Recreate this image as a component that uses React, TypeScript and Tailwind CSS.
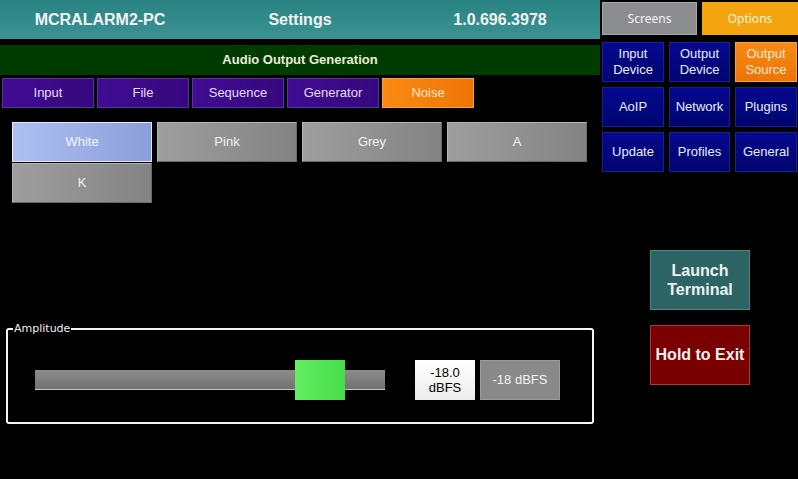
import React from 'react';

const tabs = ['Input', 'File', 'Sequence', 'Generator', 'Noise'];
const noiseTypes = ['White', 'Pink', 'Grey', 'A', 'K'];
const navItems = [
    ['Input', 'Device'],
    ['Output', 'Device'],
    ['Output', 'Source'],
    ['AoIP'],
    ['Network'],
    ['Plugins'],
    ['Update'],
    ['Profiles'],
    ['General'],
];

const App = () => {
    return (
        <div className="flex w-[798px] h-[479px] bg-black text-white overflow-hidden font-['Liberation_Sans',Arial,sans-serif]">
            {/* left panel */}
            <div className="flex flex-col w-[600px] shrink-0">
                <div className="flex items-center h-[39px] bg-gradient-to-b from-[#2a8383] to-[#3a9292] text-[16px] font-bold text-[#f2f2f2]">
                    <div className="w-[200px] text-center">MCRALARM2-PC</div>
                    <div className="w-[200px] text-center">Settings</div>
                    <div className="w-[200px] text-center">1.0.696.3978</div>
                </div>
                <div className="flex items-center justify-center h-[30px] mt-[6px] bg-[#003c00] text-[13px] font-bold text-[#ecebd8]">
                    Audio Output Generation
                </div>
                <div className="flex gap-[3px] px-[2px] mt-[3px] h-[30px]">
                    {tabs.map((t) => (
                        <div
                            key={t}
                            className={
                                t === 'Noise'
                                    ? 'flex items-center justify-center w-[92px] text-[13px] text-[#fde8d0] bg-gradient-to-r from-[#fb8a12] to-[#ee7406] border border-[#f8a050]'
                                    : 'flex items-center justify-center w-[92px] text-[13px] text-[#e6def5] bg-gradient-to-r from-[#400c92] to-[#36087e] border border-[#5a2fa5]'
                            }
                        >
                            {t}
                        </div>
                    ))}
                </div>
                <div className="grid grid-cols-[140px_140px_140px_140px] gap-x-[5px] gap-y-[1px] pl-[12px] mt-[14px]">
                    {noiseTypes.map((n) => (
                        <div
                            key={n}
                            className={
                                n === 'White'
                                    ? 'flex items-center justify-center h-[40px] text-[13px] text-[#f4f6ff] bg-gradient-to-r from-[#adbff2] to-[#8b9ed9] border border-[#e4e8ff]'
                                    : 'flex items-center justify-center h-[40px] text-[13px] text-[#f2f2f2] bg-gradient-to-r from-[#9e9e9e] to-[#838383] border-t border-l border-[#b5b5b5] border-b border-r border-b-[#6a6a6a] border-r-[#6a6a6a]'
                            }
                        >
                            {n}
                        </div>
                    ))}
                </div>
                <fieldset className="mt-[120px] ml-[6px] w-[588px] h-[101px] border-2 border-[#f4f4f4] rounded-[3px] px-0 pb-0">
                    <legend className="ml-[5px] px-[1px] text-[11px] leading-[12px] font-['DejaVu_Sans',sans-serif] text-[#f0f0f0]">
                        Amplitude
                    </legend>
                    <div className="flex items-center h-[40px] mt-[25px]">
                        <div className="flex items-center w-[350px] ml-[27px] h-[20px] bg-gradient-to-b from-[#8c8c8c] to-[#727272] border-b border-[#c8c8c8]">
                            <div className="w-[260px]" />
                            <div className="w-[50px] h-[40px] bg-gradient-to-r from-[#62ee62] to-[#48dc48]" />
                        </div>
                        <div className="flex flex-col items-center justify-center w-[60px] h-[40px] ml-[30px] bg-gradient-to-b from-[#ffffff] to-[#ececec] text-black text-[13px] leading-[15px]">
                            <span>-18.0</span>
                            <span>dBFS</span>
                        </div>
                        <div className="flex items-center justify-center w-[80px] h-[40px] ml-[5px] bg-[#8a8a8a] border border-[#9c9c9c] text-[13px] text-[#f2f2f2]">
                            -18 dBFS
                        </div>
                    </div>
                </fieldset>
            </div>

            {/* right panel */}
            <div className="flex flex-col flex-1 pl-[2px] pt-[2px]">
                <div className="flex gap-[5px] h-[33px]">
                    <div className="flex items-center justify-center w-[95px] bg-[#8b8d8f] border border-[#a5a7a9] text-[12px] text-[#f4f4f4] font-['Noto_Sans',sans-serif]">
                        Screens
                    </div>
                    <div className="flex items-center justify-center w-[96px] bg-[#f3a40e] text-[12px] text-[#fff3d8] font-['Noto_Sans',sans-serif]">
                        Options
                    </div>
                </div>
                <div className="grid grid-cols-[62px_61px_62px] auto-rows-[40px] gap-[5px] mt-[7px]">
                    {navItems.map((lines, i) => (
                        <div
                            key={i}
                            className={
                                i === 2
                                    ? 'flex flex-col items-center justify-center text-[13px] leading-[16px] text-[#fde8d0] bg-gradient-to-b from-[#f88a14] to-[#ec7404] border border-[#f9a050]'
                                    : 'flex flex-col items-center justify-center text-[13px] leading-[16px] text-[#e8ecff] bg-gradient-to-b from-[#06098e] to-[#00056e] border border-[#1a1e9c]'
                            }
                        >
                            {lines.map((l) => (
                                <span key={l}>{l}</span>
                            ))}
                        </div>
                    ))}
                </div>
                <div className="flex flex-col items-start pl-[48px] mt-[78px] gap-[15px]">
                    <div className="flex flex-col items-center justify-center w-[100px] h-[60px] bg-[#2c6464] border border-[#4e8686] text-[16px] leading-[19px] font-bold text-[#f0f0f0]">
                        <span>Launch</span>
                        <span>Terminal</span>
                    </div>
                    <div className="flex items-center justify-center w-[100px] h-[60px] bg-[#7a0000] border border-[#a43a3a] text-[16px] font-bold text-[#f0f0f0]">
                        Hold to Exit
                    </div>
                </div>
            </div>
        </div>
    );
};

export default App;
